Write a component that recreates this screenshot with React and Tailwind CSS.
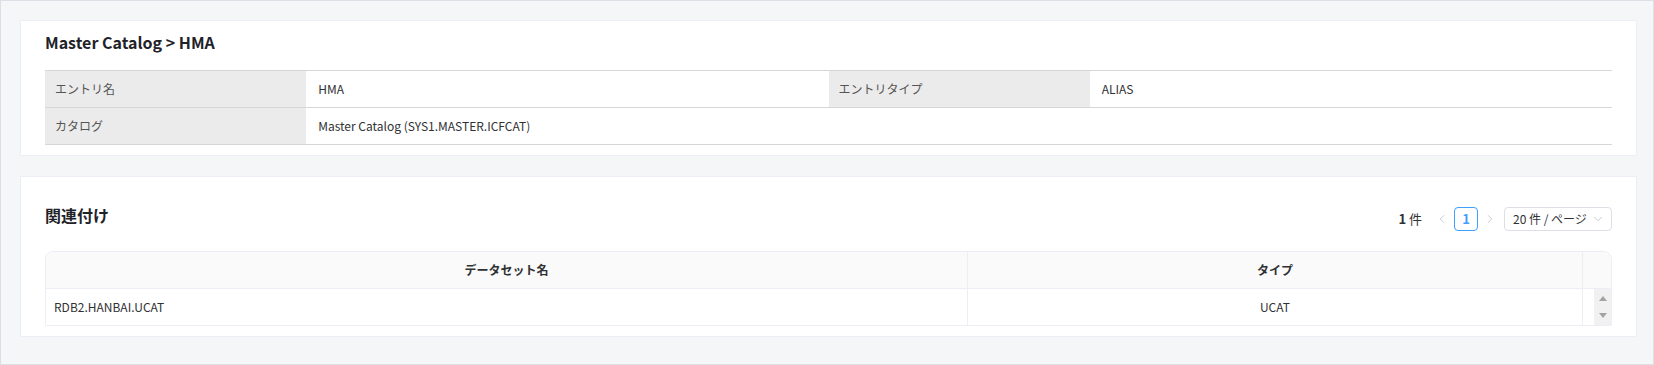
import React from 'react';
import { ChevronLeft, ChevronRight, ChevronDown } from 'lucide-react';

const InfoRow = ({ children }) => (
  <div className="col-span-4 grid h-[37px] grid-cols-[1fr_2fr_1fr_2fr] border-b border-[#d6d6d6]">{children}</div>
);

const Label = ({ children }) => (
  <div className="flex items-center bg-[#ebebeb] px-2.5 text-xs text-[#555]">{children}</div>
);

const Value = ({ children, className = '' }) => (
  <div className={`flex items-center px-3 text-xs text-[#303133] ${className}`}>{children}</div>
);

export default function App() {
  return (
    <div className="h-[365px] w-[1654px] border border-[#dcdfe6] bg-[#f5f6f8] pt-[19px] pl-[19px] pr-[16px] font-['Noto_Sans_CJK_JP',sans-serif] text-[#303133]">
      {/* Entry detail */}
      <div className="border border-[#ebeef5] bg-white px-6 pt-[9px] pb-[10px]">
        <h2 className="mb-4 text-base leading-6 font-bold text-[#1f2329]">Master Catalog &gt; HMA</h2>
        <div className="grid grid-cols-[1fr_2fr_1fr_2fr] border-t border-[#d6d6d6]">
          <InfoRow>
            <Label>エントリ名</Label>
            <Value>HMA</Value>
            <Label>エントリタイプ</Label>
            <Value>ALIAS</Value>
          </InfoRow>
          <InfoRow>
            <Label>カタログ</Label>
            <Value className="col-span-3">Master Catalog (SYS1.MASTER.ICFCAT)</Value>
          </InfoRow>
        </div>
      </div>

      {/* Associations */}
      <div className="mt-5 border border-[#ebeef5] bg-white px-6 pt-[30px] pb-[10px]">
        <div className="mb-5 flex h-6 items-center justify-between">
          <h2 className="mb-2 text-base leading-6 font-bold text-[#1f2329]">関連付け</h2>
          <div className="flex items-center text-[13px]">
            <span className="mr-2 text-[#303133]">
              <span className="font-bold">1</span> 件
            </span>
            <button className="flex h-6 w-6 items-center justify-center text-[#c0c4cc]">
              <ChevronLeft size={14} strokeWidth={1.5} />
            </button>
            <button className="flex h-6 w-6 items-center justify-center rounded border border-[#409eff] text-[13px] font-bold text-[#409eff]">
              1
            </button>
            <button className="flex h-6 w-6 items-center justify-center text-[#c0c4cc]">
              <ChevronRight size={14} strokeWidth={1.5} />
            </button>
            <div className="ml-[2px] flex h-6 w-[108px] items-center justify-between rounded border border-[#dcdfe6] pr-1.5 pl-2 text-xs whitespace-nowrap text-[#303133]">
              <span>20 件 / ページ</span>
              <ChevronDown size={14} strokeWidth={1.5} className="shrink-0 text-[#c0c4cc]" />
            </div>
          </div>
        </div>

        <div className="rounded-t-lg border border-[#ebeef5] text-xs">
          <div className="flex h-[37px] rounded-t-lg border-b border-[#ebeef5] bg-[#fafafa] font-bold text-[#303133]">
            <div className="flex w-[922px] items-center justify-center border-r border-[#ebeef5]">データセット名</div>
            <div className="flex flex-1 items-center justify-center border-r border-[#ebeef5]">タイプ</div>
            <div className="w-[28px]" />
          </div>
          <div className="flex h-9 text-[#303133]">
            <div className="flex w-[922px] items-center border-r border-[#ebeef5] px-2">RDB2.HANBAI.UCAT</div>
            <div className="flex flex-1 items-center justify-center border-r border-[#ebeef5]">UCAT</div>
            <div className="flex w-[28px] justify-end">
              <div className="flex w-[17px] flex-col items-center justify-between bg-[#f1f1f1] py-[7px]">
                <span className="h-0 w-0 border-x-[4px] border-b-[5px] border-x-transparent border-b-[#a3a3a3]" />
                <span className="h-0 w-0 border-x-[4px] border-t-[5px] border-x-transparent border-t-[#a3a3a3]" />
              </div>
            </div>
          </div>
        </div>
      </div>
    </div>
  );
}
